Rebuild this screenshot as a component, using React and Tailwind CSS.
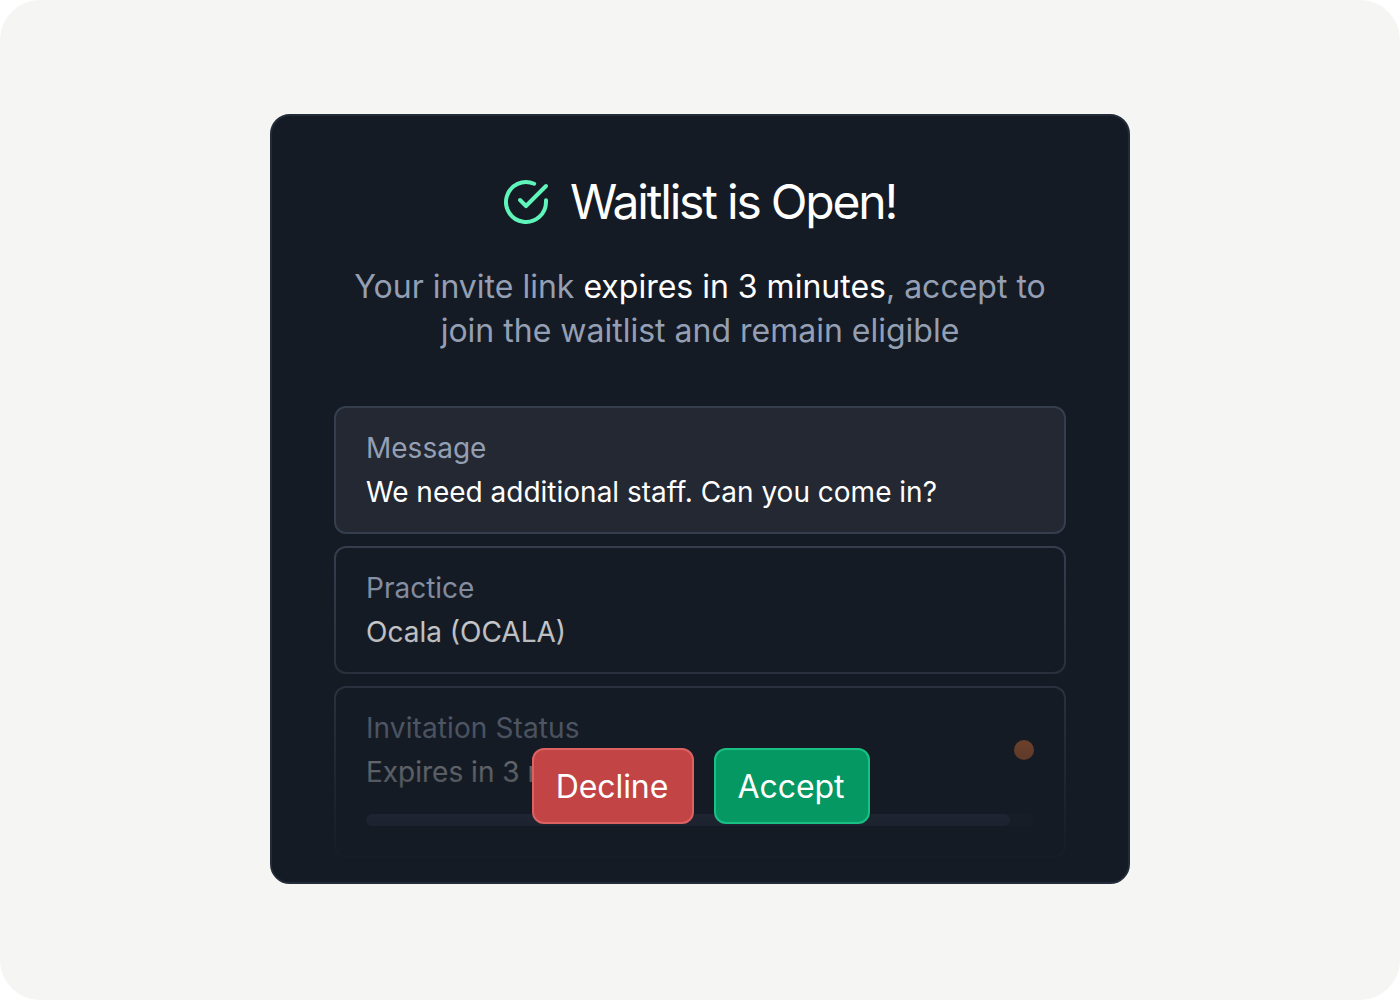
import React from "react";
import { FiCheckCircle } from "react-icons/fi";

const details = [
  { label: "Message", value: "We need additional staff. Can you come in?", active: true },
  { label: "Practice", value: "Ocala (OCALA)" },
];

const DetailCard = ({ label, value, active }) => (
  <div
    className={`h-32 rounded-xl border-2 border-[#353e4d] px-[30px] pt-[18px] text-[28px] leading-[44px] ${
      active ? "bg-[#232833]" : ""
    }`}
  >
    <div className="text-[#949fb4]">{label}</div>
    <div className="text-white">{value}</div>
  </div>
);

const StatusCard = () => (
  <div className="h-[172px] rounded-xl border-2 border-[#3a4354] px-[30px] pt-[18px] text-[28px] leading-[44px]">
    <div className="flex items-center justify-between">
      <div>
        <div className="tracking-[0.1px] text-[#949fb4]">Invitation Status</div>
        <div className="text-white">Expires in 3 minutes</div>
      </div>
      <div className="size-5 rounded-full bg-[#f17835]" />
    </div>
    <div className="mt-5 h-3 overflow-hidden rounded-md bg-[#232833]">
      <div className="h-full w-[644px] rounded-md bg-[#4b5474]" />
    </div>
  </div>
);

const App = () => {
  return (
    <div className="h-[1000px] w-[1400px] bg-white">
      <div className="flex h-full justify-center rounded-[40px] bg-[#f5f5f3] pt-[114px] font-[Inter,sans-serif]">
        <div className="relative h-[770px] w-[860px] overflow-hidden rounded-[20px] border-2 border-[#222b38] bg-[#151b24] px-[62px] pt-14">
          <div className="flex h-[60px] items-center justify-center gap-5 pr-0.5">
            <FiCheckCircle className="size-12 text-[#5ff5ba]" />
            <h1 className="text-[48px] leading-[60px] tracking-[-2.2px] text-white">Waitlist is Open!</h1>
          </div>
          <p className="mt-[33px] text-center text-[32px] leading-[44px] text-[#949fb4]">
            Your invite link <span className="text-white">expires in 3 minutes</span>, accept to
            <br />
            join the waitlist and remain eligible
          </p>
          <div className="mt-[53px] flex flex-col gap-3">
            {details.map((item) => (
              <DetailCard key={item.label} {...item} />
            ))}
            <StatusCard />
          </div>
          {/* fades the list out behind the actions */}
          <div className="absolute inset-x-0 bottom-0 h-[338px] bg-linear-to-t from-[#151b24] from-4% to-[#151b24]/0" />
          <div className="absolute inset-x-0 top-[632px] flex justify-center gap-5 pl-0.5">
            <button className="h-[76px] w-[162px] rounded-xl border-2 border-[#dc6262] bg-[#c24444] pt-px pr-0.5 text-[32px] tracking-[-0.1px] text-white">
              Decline
            </button>
            <button className="h-[76px] w-[156px] rounded-xl border-2 border-[#18c084] bg-[#059862] pt-px pr-0.5 text-[32px] tracking-[-0.1px] text-white">
              Accept
            </button>
          </div>
        </div>
      </div>
    </div>
  );
};

export default App;
